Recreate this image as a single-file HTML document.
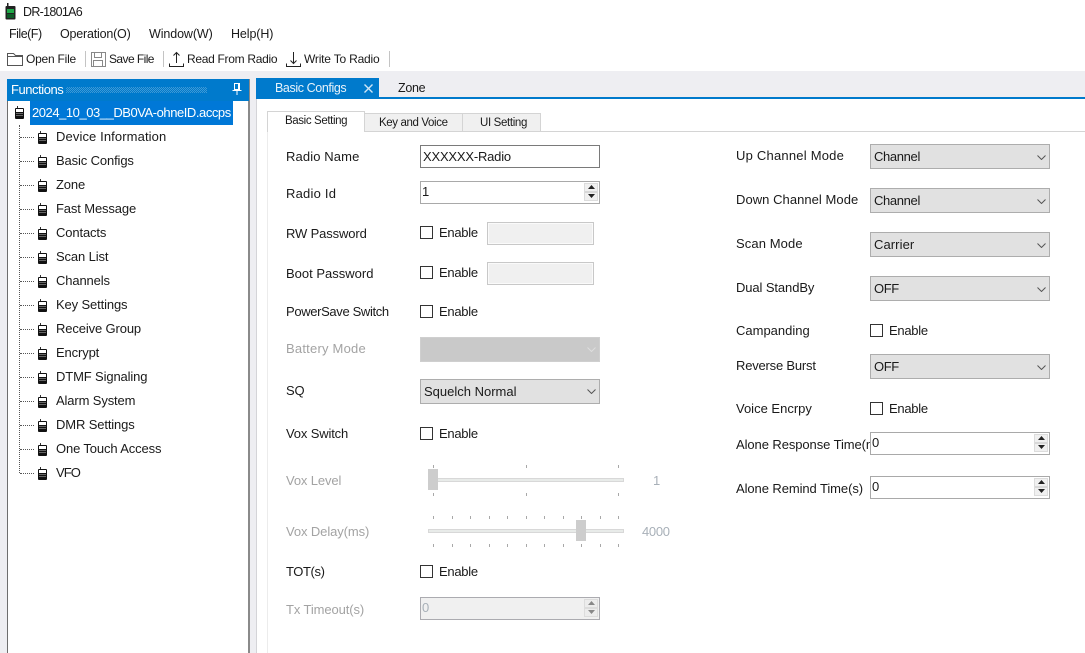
<!DOCTYPE html>
<html><head><meta charset="utf-8"><title>DR-1801A6</title>
<style>
html,body{margin:0;padding:0;width:1085px;height:653px;overflow:hidden;background:#fff}
#a{position:relative;width:1085px;height:653px;overflow:hidden;font:13px/16px "Liberation Sans","DejaVu Sans",sans-serif;color:#1a1a1a;letter-spacing:-.13px}
#a div,#a span,#a svg{position:absolute;box-sizing:border-box}
.t{white-space:nowrap;height:16px}
.e{letter-spacing:-.28px}
.g{color:#a3a3a3}
.v{color:#a8b0b8}
.w{color:#fff}
.c{width:13px;height:13px;border:1px solid #333;background:#fff;left:420px}
.d{width:107px;height:23px;left:487px;background:#f0f0f0;border:1px solid #c8c8c8;box-shadow:inset 0 0 0 1px #fafafa}
.s{height:25px;width:180px;background:#e1e1e1;border:1px solid #adadad}
.i{height:23px;width:180px;background:#fff;border:1px solid #a9a9a9}
.u{width:14px;height:18px;right:1px;top:1px;border:1px solid #dcdcdc;background:linear-gradient(#f0f0f0 0 7px,#d8d8d8 7px 9px,#f0f0f0 9px)}
.h{width:7px;height:4px}
.k{width:1px;height:3px;background:#a8a8a8}
.r{width:9px;height:11px;border:1px solid #111;border-radius:1px;left:38px;background:linear-gradient(#fff 0 3px,#111 3px 4px,#666 4px 5px,#111 5px 6px,#666 6px 7px,#111 7px)}
.a{width:1px;height:2px;background:#333;left:40px}
.l{height:1px;left:20px;width:14px;border-top:1px dotted #555}
</style></head><body><div id="a">

<!-- title -->
<svg style="left:4px;top:3px" width="13" height="17" viewBox="0 0 13 17"><rect x="3" y="0" width="1.500" height="4" fill="#222"/><rect x="1.500" y="3" width="10" height="13.500" rx="1" fill="#222"/><rect x="3" y="6" width="7" height="4" fill="#1fa847"/><rect x="3" y="11" width="7" height="4" fill="#0d5a26"/></svg>
<span class="t" style="left:23px;top:4px;font-size:12.5px;letter-spacing:-.7px">DR-1801A6</span>
<span class="t" style="left:9px;top:26px;font-size:12.5px;letter-spacing:-.5px">File(F)</span>
<span class="t" style="left:60px;top:26px;font-size:12.5px;letter-spacing:-.2px">Operation(O)</span>
<span class="t" style="left:149px;top:26px;font-size:12.5px;letter-spacing:-.1px">Window(W)</span>
<span class="t" style="left:231px;top:26px;font-size:12.5px;letter-spacing:-.1px">Help(H)</span>

<!-- toolbar -->
<svg style="left:6px;top:50px" width="18" height="18" viewBox="0 0 18 18" fill="none" stroke="#555"><path d="M1.500 15.500V3.500H7.500L9.500 5.500H16.500V15.500Z"/><path d="M1.500 6.500H16.500"/></svg>
<span class="t" style="left:26px;top:51px;font-size:12px;letter-spacing:-.23px">Open File</span>
<div style="left:85px;top:51px;width:1px;height:16px;background:#c4c4c4"></div>
<svg style="left:90px;top:51px" width="17" height="17" viewBox="0 0 17 17" fill="none" stroke="#888"><path d="M1.500 1.500H15.500V15.500H1.500Z"/><path d="M4.500 1.500V6.500H11.500V1.500M3.500 15.500V9.500H12.500V15.500"/></svg>
<span class="t" style="left:109px;top:51px;font-size:12px;letter-spacing:-.57px">Save File</span>
<div style="left:163px;top:51px;width:1px;height:16px;background:#c4c4c4"></div>
<svg style="left:168px;top:51px" width="17" height="17" viewBox="0 0 17 17" fill="none" stroke="#222"><path d="M1.500 12.500V15.500H15.500V12.500"/><path d="M8.500 12V1.500M5.500 4.500L8.500 1.500L11.500 4.500"/></svg>
<span class="t" style="left:187px;top:51px;font-size:12px;letter-spacing:-.3px">Read From Radio</span>
<svg style="left:285px;top:51px" width="17" height="17" viewBox="0 0 17 17" fill="none" stroke="#222"><path d="M1.500 12.500V15.500H15.500V12.500"/><path d="M8.500 1V12.500M5.500 9.500L8.500 12.500L11.500 9.500"/></svg>
<span class="t" style="left:304px;top:51px;font-size:12px;letter-spacing:-.2px">Write To Radio</span>
<div style="left:389px;top:51px;width:1px;height:16px;background:#c4c4c4"></div>

<!-- background -->
<div style="left:0;top:71px;width:1085px;height:582px;background:#eeeef2"></div>

<!-- left panel -->
<div style="left:7px;top:79px;width:243px;height:574px;background:#fff;border-left:1px solid #6e6e6e;border-right:2px solid #8a8a8a"></div>
<div style="left:7px;top:79px;width:242px;height:22px;background:#007acc"></div>
<span class="t w" style="left:11px;top:82px;letter-spacing:-.45px">Functions</span>
<div style="left:66px;top:87px;width:141px;height:6px;background-image:repeating-conic-gradient(#3f9ad6 0 25%,#007acc 0 50%);background-size:2px 2px"></div>
<svg style="left:232px;top:83px" width="10" height="12" viewBox="0 0 10 12" fill="none" stroke="#fff"><path d="M2.500 .5H7.500V6.500H2.500ZM.5 7.500H9.500M5 8V12M6.500 1V6"/></svg>
<div style="left:30px;top:101px;width:203px;height:24px;background:#0078d7"></div>
<div class="a" style="left:17px;top:106px"></div><div class="r" style="left:15px;top:108px"></div>
<span class="t w" style="left:32px;top:105px;letter-spacing:-.45px">2024_10_03__DB0VA-ohneID.accps</span>

<div style="left:19px;top:125px;height:348px;width:1px;border-left:1px dotted #555"></div>
<div class="l" style="top:137px"></div><div class="a" style="top:131px"></div><div class="r" style="top:133px"></div><span class="t" style="left:56px;top:129px;letter-spacing:.11px">Device Information</span>
<div class="l" style="top:161px"></div><div class="a" style="top:155px"></div><div class="r" style="top:157px"></div><span class="t" style="left:56px;top:153px">Basic Configs</span>
<div class="l" style="top:185px"></div><div class="a" style="top:179px"></div><div class="r" style="top:181px"></div><span class="t" style="left:56px;top:177px">Zone</span>
<div class="l" style="top:209px"></div><div class="a" style="top:203px"></div><div class="r" style="top:205px"></div><span class="t" style="left:56px;top:201px">Fast Message</span>
<div class="l" style="top:233px"></div><div class="a" style="top:227px"></div><div class="r" style="top:229px"></div><span class="t" style="left:56px;top:225px">Contacts</span>
<div class="l" style="top:257px"></div><div class="a" style="top:251px"></div><div class="r" style="top:253px"></div><span class="t" style="left:56px;top:249px">Scan List</span>
<div class="l" style="top:281px"></div><div class="a" style="top:275px"></div><div class="r" style="top:277px"></div><span class="t" style="left:56px;top:273px">Channels</span>
<div class="l" style="top:305px"></div><div class="a" style="top:299px"></div><div class="r" style="top:301px"></div><span class="t" style="left:56px;top:297px">Key Settings</span>
<div class="l" style="top:329px"></div><div class="a" style="top:323px"></div><div class="r" style="top:325px"></div><span class="t" style="left:56px;top:321px">Receive Group</span>
<div class="l" style="top:353px"></div><div class="a" style="top:347px"></div><div class="r" style="top:349px"></div><span class="t" style="left:56px;top:345px">Encrypt</span>
<div class="l" style="top:377px"></div><div class="a" style="top:371px"></div><div class="r" style="top:373px"></div><span class="t" style="left:56px;top:369px">DTMF Signaling</span>
<div class="l" style="top:401px"></div><div class="a" style="top:395px"></div><div class="r" style="top:397px"></div><span class="t" style="left:56px;top:393px">Alarm System</span>
<div class="l" style="top:425px"></div><div class="a" style="top:419px"></div><div class="r" style="top:421px"></div><span class="t" style="left:56px;top:417px">DMR Settings</span>
<div class="l" style="top:449px"></div><div class="a" style="top:443px"></div><div class="r" style="top:445px"></div><span class="t" style="left:56px;top:441px">One Touch Access</span>
<div class="l" style="top:473px"></div><div class="a" style="top:467px"></div><div class="r" style="top:469px"></div><span class="t" style="left:56px;top:465px;letter-spacing:-.9px">VFO</span>

<!-- content -->
<div style="left:256px;top:97px;width:829px;height:556px;background:#fff;border-left:1px solid #d4d4d8"></div>
<div style="left:256px;top:78px;width:123px;height:19px;background:#007acc"></div>
<div style="left:256px;top:97px;width:829px;height:2px;background:#007acc"></div>
<span class="t" style="left:275px;top:80px;font-size:12.5px;letter-spacing:-.4px;color:#e6f2fa">Basic Configs</span>
<svg style="left:364px;top:84px" width="9" height="9" viewBox="0 0 9 9" stroke="#cfe6f6" stroke-width="1.400"><path d="M.5 .5L8.500 8.500M8.500 .5L.5 8.500"/></svg>
<span class="t" style="left:398px;top:80px;font-size:12.5px;letter-spacing:-.3px">Zone</span>

<!-- inner tabs -->
<div style="left:365px;top:131px;width:720px;height:1px;background:#d4d4d4"></div>
<div style="left:267px;top:131px;width:1px;height:522px;background:#ececec"></div>
<div style="left:364px;top:113px;width:99px;height:18px;background:#f0f0f0;border:1px solid #d4d4d4;border-bottom:0"></div>
<div style="left:463px;top:113px;width:78px;height:18px;background:#f0f0f0;border:1px solid #d4d4d4;border-bottom:0;border-left:0"></div>
<div style="left:267px;top:111px;width:98px;height:21px;background:#fff;border:1px solid #d4d4d4;border-bottom:0"></div>
<span class="t" style="left:285px;top:113px;font-size:11.5px;letter-spacing:-.38px">Basic Setting</span>
<span class="t" style="left:379px;top:115px;font-size:11.5px;letter-spacing:-.38px">Key and Voice</span>
<span class="t" style="left:480px;top:115px;font-size:11.5px;letter-spacing:-.35px">UI Setting</span>

<!-- left column -->
<span class="t" style="left:286px;top:149px;letter-spacing:.12px">Radio Name</span>
<div class="i" style="left:420px;top:145px;border-color:#7a7a7a"></div>
<span class="t" style="left:423px;top:149px;letter-spacing:-.2px">XXXXXX-Radio</span>

<span class="t" style="left:286px;top:186px;letter-spacing:.22px">Radio Id</span>
<div class="i" style="left:420px;top:181px"><div class="u"></div>
<svg class="h" style="left:167px;top:3px" viewBox="0 0 9 5" preserveAspectRatio="none"><path d="M4.500 0L9 5H0Z" fill="#222"/></svg>
<svg class="h" style="left:167px;top:12px" viewBox="0 0 9 5" preserveAspectRatio="none"><path d="M0 0H9L4.500 5Z" fill="#222"/></svg></div>
<span class="t" style="left:422px;top:184px">1</span>

<span class="t" style="left:286px;top:226px">RW Password</span>
<div class="c" style="top:226px"></div><span class="t e" style="left:439px;top:225px">Enable</span>
<div class="d" style="top:222px"></div>

<span class="t" style="left:286px;top:266px;letter-spacing:0">Boot Password</span>
<div class="c" style="top:266px"></div><span class="t e" style="left:439px;top:265px">Enable</span>
<div class="d" style="top:262px"></div>

<span class="t" style="left:286px;top:304px;letter-spacing:-.35px">PowerSave Switch</span>
<div class="c" style="top:305px"></div><span class="t e" style="left:439px;top:304px">Enable</span>

<span class="t g" style="left:286px;top:341px;letter-spacing:.22px">Battery Mode</span>
<div class="s" style="left:420px;top:337px;background:#c9c9c9;border-color:#cfcfcf"></div>
<svg style="left:587px;top:347px" width="9" height="5" viewBox="0 0 9 5" fill="none" stroke="#dedede"><path d="M.5 .5L4.500 4.500L8.500 .5"/></svg>

<span class="t" style="left:286px;top:383px">SQ</span>
<div class="s" style="left:420px;top:379px"></div>
<span class="t" style="left:424px;top:384px;letter-spacing:0">Squelch Normal</span>
<svg style="left:587px;top:389px" width="9" height="5" viewBox="0 0 9 5" fill="none" stroke="#555"><path d="M.5 .5L4.500 4.500L8.500 .5"/></svg>

<span class="t" style="left:286px;top:426px;letter-spacing:-.15px">Vox Switch</span>
<div class="c" style="top:427px"></div><span class="t e" style="left:439px;top:426px">Enable</span>

<span class="t g" style="left:286px;top:473px">Vox Level</span>
<div style="left:428px;top:478px;width:196px;height:4px;background:#e8ebe9;border:1px solid #d8d8d8"></div>
<div style="left:428px;top:469px;width:10px;height:21px;background:#cdcdcd"></div>
<div class="k" style="left:433px;top:465px"></div><div class="k" style="left:526px;top:465px"></div><div class="k" style="left:618px;top:465px"></div>
<div class="k" style="left:433px;top:493px"></div><div class="k" style="left:526px;top:493px"></div><div class="k" style="left:618px;top:493px"></div>
<span class="t v" style="left:653px;top:473px">1</span>

<span class="t g" style="left:286px;top:524px;letter-spacing:-.1px">Vox Delay(ms)</span>
<div style="left:428px;top:529px;width:196px;height:4px;background:#e8ebe9;border:1px solid #d8d8d8"></div>
<div style="left:576px;top:520px;width:10px;height:21px;background:#cdcdcd"></div>
<div class="k" style="left:433px;top:516px"></div><div class="k" style="left:452px;top:516px"></div><div class="k" style="left:470px;top:516px"></div><div class="k" style="left:489px;top:516px"></div><div class="k" style="left:507px;top:516px"></div><div class="k" style="left:526px;top:516px"></div><div class="k" style="left:544px;top:516px"></div><div class="k" style="left:563px;top:516px"></div><div class="k" style="left:581px;top:516px"></div><div class="k" style="left:600px;top:516px"></div><div class="k" style="left:618px;top:516px"></div>
<div class="k" style="left:433px;top:544px"></div><div class="k" style="left:452px;top:544px"></div><div class="k" style="left:470px;top:544px"></div><div class="k" style="left:489px;top:544px"></div><div class="k" style="left:507px;top:544px"></div><div class="k" style="left:526px;top:544px"></div><div class="k" style="left:544px;top:544px"></div><div class="k" style="left:563px;top:544px"></div><div class="k" style="left:581px;top:544px"></div><div class="k" style="left:600px;top:544px"></div><div class="k" style="left:618px;top:544px"></div>
<span class="t v" style="left:642px;top:524px;letter-spacing:-.3px">4000</span>

<span class="t" style="left:286px;top:564px;letter-spacing:-.4px">TOT(s)</span>
<div class="c" style="top:565px"></div><span class="t e" style="left:439px;top:564px">Enable</span>

<span class="t g" style="left:286px;top:602px;letter-spacing:-.1px">Tx Timeout(s)</span>
<div class="i" style="left:420px;top:597px;background:#f0f0f0;border-color:#ababb0"><div class="u" style="background:linear-gradient(#ececec 0 7px,#dcdcdc 7px 9px,#ececec 9px)"></div>
<svg class="h" style="left:167px;top:3px" viewBox="0 0 9 5" preserveAspectRatio="none"><path d="M4.500 0L9 5H0Z" fill="#888"/></svg>
<svg class="h" style="left:167px;top:12px" viewBox="0 0 9 5" preserveAspectRatio="none"><path d="M0 0H9L4.500 5Z" fill="#888"/></svg></div>
<span class="t v" style="left:422px;top:600px">0</span>

<!-- right column -->
<span class="t" style="left:736px;top:148px;letter-spacing:.22px">Up Channel Mode</span>
<div class="s" style="left:870px;top:144px"></div><span class="t" style="left:874px;top:149px;letter-spacing:-.35px">Channel</span>
<svg style="left:1037px;top:155px" width="9" height="5" viewBox="0 0 9 5" fill="none" stroke="#555"><path d="M.5 .5L4.500 4.500L8.500 .5"/></svg>

<span class="t" style="left:736px;top:192px;letter-spacing:.05px">Down Channel Mode</span>
<div class="s" style="left:870px;top:188px"></div><span class="t" style="left:874px;top:193px;letter-spacing:-.35px">Channel</span>
<svg style="left:1037px;top:199px" width="9" height="5" viewBox="0 0 9 5" fill="none" stroke="#555"><path d="M.5 .5L4.500 4.500L8.500 .5"/></svg>

<span class="t" style="left:736px;top:236px;letter-spacing:.1px">Scan Mode</span>
<div class="s" style="left:870px;top:232px"></div><span class="t" style="left:874px;top:237px;letter-spacing:.08px">Carrier</span>
<svg style="left:1037px;top:243px" width="9" height="5" viewBox="0 0 9 5" fill="none" stroke="#555"><path d="M.5 .5L4.500 4.500L8.500 .5"/></svg>

<span class="t" style="left:736px;top:280px;letter-spacing:-.1px">Dual StandBy</span>
<div class="s" style="left:870px;top:276px"></div><span class="t" style="left:874px;top:281px;letter-spacing:-.4px">OFF</span>
<svg style="left:1037px;top:287px" width="9" height="5" viewBox="0 0 9 5" fill="none" stroke="#555"><path d="M.5 .5L4.500 4.500L8.500 .5"/></svg>

<span class="t" style="left:736px;top:323px;letter-spacing:0">Campanding</span>
<div class="c" style="left:870px;top:324px"></div><span class="t e" style="left:889px;top:323px">Enable</span>

<span class="t" style="left:736px;top:358px;letter-spacing:-.2px">Reverse Burst</span>
<div class="s" style="left:870px;top:354px"></div><span class="t" style="left:874px;top:359px;letter-spacing:-.4px">OFF</span>
<svg style="left:1037px;top:365px" width="9" height="5" viewBox="0 0 9 5" fill="none" stroke="#555"><path d="M.5 .5L4.500 4.500L8.500 .5"/></svg>

<span class="t" style="left:736px;top:401px;letter-spacing:0">Voice Encrpy</span>
<div class="c" style="left:870px;top:402px"></div><span class="t e" style="left:889px;top:401px">Enable</span>

<span class="t" style="left:736px;top:437px;width:134px;overflow:hidden;letter-spacing:-.08px">Alone Response Time(ms)</span>
<div class="i" style="left:870px;top:432px"><div class="u"></div>
<svg class="h" style="left:167px;top:3px" viewBox="0 0 9 5" preserveAspectRatio="none"><path d="M4.500 0L9 5H0Z" fill="#222"/></svg>
<svg class="h" style="left:167px;top:12px" viewBox="0 0 9 5" preserveAspectRatio="none"><path d="M0 0H9L4.500 5Z" fill="#222"/></svg></div>
<span class="t" style="left:872px;top:435px">0</span>

<span class="t" style="left:736px;top:481px;letter-spacing:-.08px">Alone Remind Time(s)</span>
<div class="i" style="left:870px;top:476px"><div class="u"></div>
<svg class="h" style="left:167px;top:3px" viewBox="0 0 9 5" preserveAspectRatio="none"><path d="M4.500 0L9 5H0Z" fill="#222"/></svg>
<svg class="h" style="left:167px;top:12px" viewBox="0 0 9 5" preserveAspectRatio="none"><path d="M0 0H9L4.500 5Z" fill="#222"/></svg></div>
<span class="t" style="left:872px;top:479px">0</span>

</div></body></html>
